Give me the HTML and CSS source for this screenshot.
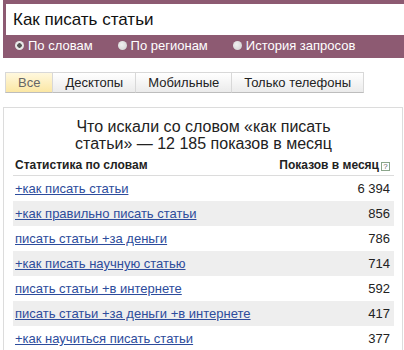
FILE: index.html
```html
<!DOCTYPE html>
<html lang="ru">
<head>
    <meta charset="UTF-8">
    <meta name="viewport" content="width=device-width, initial-scale=1.0">
    <title>Подбор слов</title>
    <link rel="stylesheet" href="styles.css">
</head>
<body>
    <div class="header">
        <div class="search">Как писать статьи</div>
        <div class="modes">
            <span class="mode"><i class="dot on"></i>По словам</span>
            <span class="mode"><i class="dot"></i>По регионам</span>
            <span class="mode"><i class="dot"></i>История запросов</span>
        </div>
    </div>

    <div class="tabs">
        <span class="tab active">Все</span>
        <span class="tab">Десктопы</span>
        <span class="tab">Мобильные</span>
        <span class="tab">Только телефоны</span>
    </div>

    <div class="panel">
        <div class="title">Что искали со словом «как писать<br>статьи» — 12 185 показов в месяц</div>
        <table class="stats">
            <thead>
                <tr>
                    <th>Статистика по словам</th>
                    <th class="num">Показов в месяц<span class="help">?</span></th>
                </tr>
            </thead>
            <tbody>
                <tr><td><a href="#">+как писать статьи</a></td><td class="num">6 394</td></tr>
                <tr><td><a href="#">+как правильно писать статьи</a></td><td class="num">856</td></tr>
                <tr><td><a href="#">писать статьи +за деньги</a></td><td class="num">786</td></tr>
                <tr><td><a href="#">+как писать научную статью</a></td><td class="num">714</td></tr>
                <tr><td><a href="#">писать статьи +в интернете</a></td><td class="num">592</td></tr>
                <tr><td><a href="#">писать статьи +за деньги +в интернете</a></td><td class="num">417</td></tr>
                <tr><td><a href="#">+как научиться писать статьи</a></td><td class="num">377</td></tr>
            </tbody>
        </table>
    </div>
</body>
</html>
```

FILE: styles.css
```css
body {
    margin: 0;
    font-family: Arial, "Liberation Sans", sans-serif;
    color: #222;
    background: #fff;
}
.header {
    margin-left: 3px;
    height: 58px;
    padding: 4px 0 0 3px;
    box-sizing: border-box;
    background: #8d5a72;
}
.search {
    height: 31px;
    padding-left: 7px;
    background: #fff;
    font-size: 17px;
    line-height: 31px;
    color: #111;
}
.modes {
    display: flex;
    align-items: center;
    height: 21px;
    padding-left: 9px;
    font-size: 13px;
    color: #fff;
}
.mode {
    display: flex;
    align-items: center;
    margin-right: 25px;
}
.dot {
    display: inline-block;
    width: 9px;
    height: 9px;
    margin-right: 4px;
    border-radius: 50%;
    background: radial-gradient(circle at 40% 40%, #f0f0f0, #cfcfcf);
    box-sizing: border-box;
}
.dot.on {
    background: radial-gradient(circle, #555 0 2px, #e8e8e8 2.5px);
}
.tabs {
    display: flex;
    margin: 14px 0 0 5px;
}
.tab {
    height: 21px;
    padding: 0 12px;
    line-height: 20px;
    font-size: 13px;
    color: #222;
    border: 1px solid #d8d8d8;
    border-bottom-color: #bdbdbd;
    border-left: none;
    box-sizing: border-box;
    background: linear-gradient(#fff, #ebebeb);
}
.tab:first-child {
    border-left: 1px solid #d8d8d8;
}
.tab.active {
    color: #666;
    background: linear-gradient(#fff8de, #fbe7a4);
}
.panel {
    margin: 14px 0 0 3px;
    width: 400px;
    padding: 10px 8px 0 9px;
    box-sizing: border-box;
    border: 1px solid #dcdcdc;
    border-bottom: none;
}
.title {
    text-align: center;
    font-size: 16px;
    line-height: 17px;
    color: #222;
    margin-bottom: 3px;
}
.stats {
    width: 100%;
    border-collapse: collapse;
    font-size: 13px;
}
.stats th {
    height: 20px;
    padding: 0 2px;
    text-align: left;
    font-size: 12px;
    font-weight: bold;
    color: #222;
    border-bottom: 1px solid #dcdcdc;
}
.stats td {
    height: 25px;
    padding: 0 2px;
}
.stats .num {
    text-align: right;
    padding-right: 4px;
}
.stats tbody tr:nth-child(even) {
    background: #eeeeee;
}
.stats a {
    color: #2d4c9c;
}
.help {
    display: inline-block;
    width: 9px;
    height: 9px;
    margin-left: 2px;
    border: 1px solid #8aa58a;
    box-sizing: border-box;
    font-size: 8px;
    line-height: 8px;
    text-align: center;
    font-weight: normal;
    color: #666;
    vertical-align: 0;
}
```
